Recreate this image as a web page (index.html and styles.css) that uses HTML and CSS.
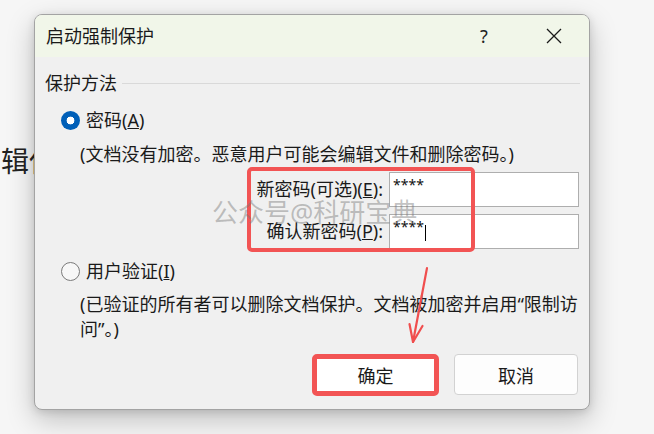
FILE: index.html
```html
<!DOCTYPE html>
<html lang="zh-CN">
<head>
<meta charset="utf-8">
<title>启动强制保护</title>
<link rel="stylesheet" href="styles.css">
</head>
<body>
<div class="page">
  <div class="doc-text">编辑保护</div>

  <div class="dialog">
    <div class="titlebar">
      <span class="title">启动强制保护</span>
      <span class="help">?</span>
      <span class="close">
        <svg width="16" height="16" viewBox="0 0 16 16"><path d="M1 1 L15 15 M15 1 L1 15" stroke="#1a1a1a" stroke-width="1.3" fill="none"/></svg>
      </span>
    </div>

    <div class="content">
      <div class="legend"><span class="legend-text">保护方法</span><span class="rule"></span></div>

      <div class="radio-row"><span class="radio checked"></span><span>密码(<u>A</u>)</span></div>
      <p class="desc">(文档没有加密。恶意用户可能会编辑文件和删除密码。)</p>

      <div class="pw-grid">
        <span class="lbl">新密码(可选)(<u>E</u>):</span>
        <span class="field">****</span>
        <span class="lbl">确认新密码(<u>P</u>):</span>
        <span class="field">****<span class="caret"></span></span>
      </div>

      <div class="radio-row second"><span class="radio"></span><span>用户验证(<u>I</u>)</span></div>
      <p class="desc wide">(已验证的所有者可以删除文档保护。文档被加密并启用“限制访问”。)</p>

      <div class="buttons">
        <button class="btn ok">确定</button>
        <button class="btn">取消</button>
      </div>
    </div>

    <div class="annot-box"></div>
    <div class="watermark">公众号@科研宝典</div>
    <svg class="arrow" width="40" height="90" viewBox="0 0 40 90">
      <path d="M27 8 L13 82" stroke="#f04e4e" stroke-width="2.2" fill="none" stroke-linecap="round"/>
      <path d="M9.5 64 L13 82 L22.5 66" stroke="#f04e4e" stroke-width="2.2" fill="none" stroke-linecap="round" stroke-linejoin="round"/>
    </svg>
  </div>
</div>
</body>
</html>
```
FILE: styles.css
```css
* { box-sizing: border-box; }

html, body {
  margin: 0;
  padding: 0;
}

body {
  width: 654px;
  height: 434px;
  overflow: hidden;
  background: #f6f6f6;
  font-family: "Noto Sans", "Noto Sans CJK SC", sans-serif;
  color: #1a1a1a;
}

.page {
  position: relative;
  width: 654px;
  height: 434px;
}

.doc-text {
  padding-top: 141px;
  margin-left: -27px;
  font-size: 28px;
  line-height: 40px;
  color: #222;
  letter-spacing: 0;
}

.dialog {
  position: absolute;
  left: 34px;
  top: 14px;
  width: 556px;
  background: #f0f0f0;
  border: 1px solid #a3a3a3;
  border-radius: 8px;
  box-shadow: 0 10px 28px rgba(0, 0, 0, 0.22), 0 2px 8px rgba(0, 0, 0, 0.12);
  font-size: 18px;
  overflow: visible;
}

.titlebar {
  display: flex;
  align-items: center;
  height: 42px;
  padding-left: 11px;
  background: #f1f6e9;
  border-radius: 7px 7px 0 0;
}

.title {
  flex: 1;
  line-height: 42px;
}

.help {
  width: 20px;
  font-size: 18px;
  color: #222;
  margin-right: 46px;
}

.close {
  display: flex;
  width: 16px;
  height: 16px;
  margin-right: 27px;
}

.content {
  padding: 14px 11px 13px 10px;
}

.legend {
  display: flex;
  align-items: center;
  height: 25px;
  line-height: 25px;
}

.rule {
  flex: 1;
  height: 1px;
  background: #d9d9d9;
  margin-left: 5px;
  margin-right: -2px;
}

.radio-row {
  display: flex;
  align-items: center;
  height: 25px;
  line-height: 25px;
  margin-top: 12px;
  padding-left: 16px;
  gap: 6px;
}

.radio-row.second {
  margin-top: 10px;
}

.radio {
  width: 19px;
  height: 19px;
  border-radius: 50%;
  border: 1px solid #7a7a7a;
  background: #f7f7f7;
  flex: none;
}

.radio.checked {
  border: none;
  background: radial-gradient(circle, #ffffff 0 3.6px, #005fb8 4.2px);
}

.desc {
  margin: 9px -3px 0 0;
  padding-left: 35px;
  line-height: 25px;
}

.desc.wide {
  margin-top: 8px;
}

.pw-grid {
  display: grid;
  grid-template-columns: 338px 190px;
  grid-auto-rows: 35px;
  column-gap: 6px;
  row-gap: 7px;
  margin-top: 5px;
}

.lbl {
  text-align: right;
  line-height: 35px;
  white-space: nowrap;
}

.field {
  display: block;
  background: #ffffff;
  border: 1px solid #aeaeae;
  padding: 3px 0 0 3px;
  font-family: "Noto Sans", sans-serif;
  font-size: 14px;
  line-height: 18px;
  letter-spacing: 0;
  color: #111;
}

.caret {
  display: inline-block;
  width: 0;
  height: 16px;
  border-left: 1px solid #000;
  vertical-align: -9px;
  margin-left: 1px;
}

.buttons {
  display: flex;
  justify-content: flex-end;
  align-items: flex-start;
  gap: 15px;
  margin-top: 12px;
}

.btn {
  width: 124px;
  height: 41px;
  background: #fdfdfd;
  border: 1px solid #d2d2d2;
  border-radius: 4px;
  font-family: "Noto Sans", "Noto Sans CJK SC", sans-serif;
  font-size: 18px;
  color: #1a1a1a;
  padding: 0;
}

.btn.ok {
  width: 127px;
  height: 42px;
  border: 5px solid #f25454;
  border-radius: 5px;
  background: #ffffff;
}

.annot-box {
  position: absolute;
  left: 212px;
  top: 152px;
  width: 228px;
  height: 85px;
  border: 4px solid #f25454;
  border-radius: 5px;
  pointer-events: none;
}

.watermark {
  position: absolute;
  left: 177px;
  top: 181px;
  font-size: 26px;
  line-height: 32px;
  color: rgba(120, 120, 120, 0.45);
  white-space: nowrap;
  pointer-events: none;
}

.arrow {
  position: absolute;
  left: 365px;
  top: 245px;
  pointer-events: none;
}
```
